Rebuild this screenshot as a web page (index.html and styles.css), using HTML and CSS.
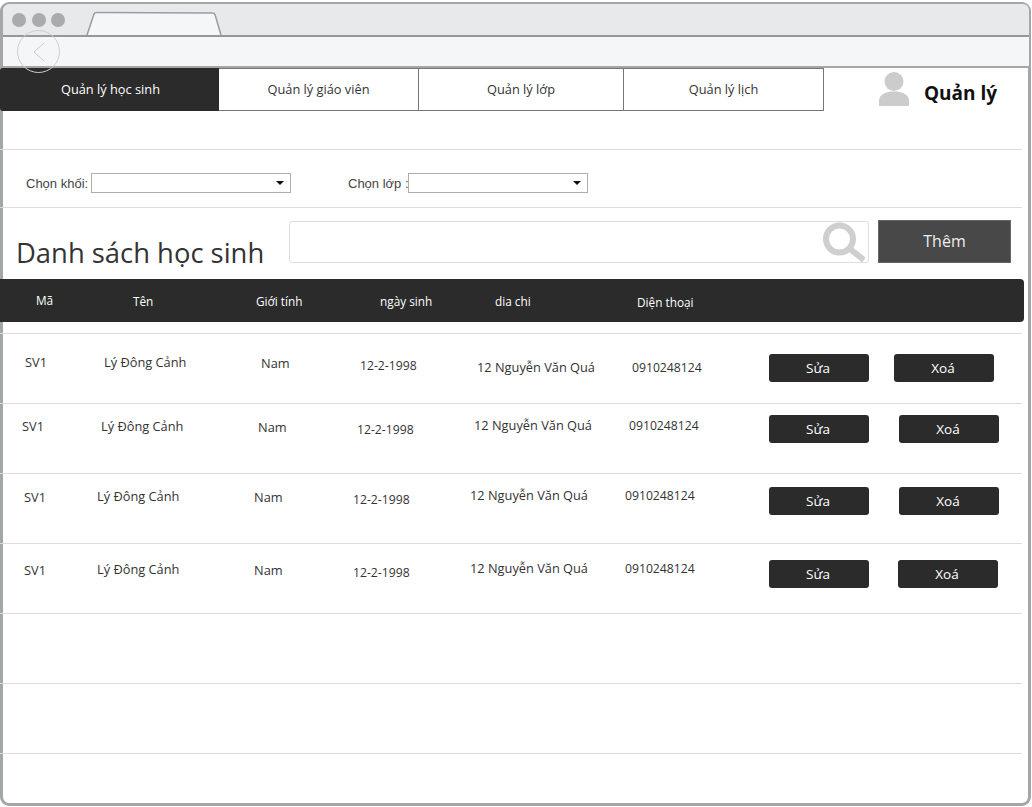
FILE: index.html
```html
<!DOCTYPE html>
<html lang="en">
<head>
  <meta charset="UTF-8">
  <title>Quản lý học sinh</title>
  <link rel="stylesheet" href="styles.css">
</head>
<body>
  <div class="window">
    <div class="chrome">
      <div class="tabstrip">
        <span class="dot"></span>
        <span class="dot"></span>
        <span class="dot"></span>
        <svg class="browser-tab" width="136" height="25" viewBox="0 0 136 25">
          <path d="M1 24 L8 3 Q8.5 1.5 11 1.5 L126 2 Q128.5 2 129 3.5 L135 24" fill="#f5f6f8" stroke="#9a9ea1" stroke-width="1.5"/>
        </svg>
      </div>
      <div class="addressbar"></div>
      <div class="back">
        <svg width="14" height="20" viewBox="0 0 14 20">
          <path d="M12 1 L2 10 L12 19" fill="none" stroke="#c9c9c9" stroke-width="1"/>
        </svg>
      </div>
    </div>

    <div class="topnav">
      <a class="nav-item nav-active">Quản lý học sinh</a>
      <a class="nav-item">Quản lý giáo viên</a>
      <a class="nav-item nav-w3">Quản lý lớp</a>
      <a class="nav-item">Quản lý lịch</a>
      <div class="user">
        <svg width="30" height="34" viewBox="0 0 30 34">
          <circle cx="15" cy="9.5" r="9.5" fill="#cccccc"/>
          <path d="M0 34 V29 C0 22 7 19.5 15 19.5 C23 19.5 30 22 30 29 V34 Z" fill="#cccccc"/>
        </svg>
        <span class="user-name">Quản lý</span>
      </div>
    </div>

    <div class="filters">
      <label class="filter-label label-khoi">Chọn khối:</label>
      <div class="select select-khoi"></div>
      <label class="filter-label label-lop">Chọn lớp :</label>
      <div class="select select-lop"></div>
    </div>

    <div class="title-row">
      <h1 class="page-title">Danh sách học sinh</h1>
      <div class="search">
        <svg width="44" height="40" viewBox="0 0 44 40">
          <circle cx="18.5" cy="17" r="13.5" fill="none" stroke="#cfcfcf" stroke-width="6"/>
          <path d="M29 27 L43 38" fill="none" stroke="#cfcfcf" stroke-width="6"/>
        </svg>
      </div>
      <button class="btn-add">Thêm</button>
    </div>

    <div class="table-head">
      <span class="th-ma">Mã</span>
      <span class="th-ten">Tên</span>
      <span class="th-gt">Giới tính</span>
      <span class="th-ns">ngày sinh</span>
      <span class="th-dc">dia chi</span>
      <span class="th-dt">Diện thoại</span>
    </div>

    <div class="rows">
      <div class="row row-1">
        <span>SV1</span><span>Lý Đông Cảnh</span><span>Nam</span><span class="date">12-2-1998</span><span>12 Nguyễn Văn Quá</span><span class="phone">0910248124</span>
        <button class="btn">Sửa</button><button class="btn">Xoá</button>
      </div>
      <div class="row row-2">
        <span>SV1</span><span>Lý Đông Cảnh</span><span>Nam</span><span class="date">12-2-1998</span><span>12 Nguyễn Văn Quá</span><span class="phone">0910248124</span>
        <button class="btn">Sửa</button><button class="btn">Xoá</button>
      </div>
      <div class="row row-3">
        <span>SV1</span><span>Lý Đông Cảnh</span><span>Nam</span><span class="date">12-2-1998</span><span>12 Nguyễn Văn Quá</span><span class="phone">0910248124</span>
        <button class="btn">Sửa</button><button class="btn">Xoá</button>
      </div>
      <div class="row row-4">
        <span>SV1</span><span>Lý Đông Cảnh</span><span>Nam</span><span class="date">12-2-1998</span><span>12 Nguyễn Văn Quá</span><span class="phone">0910248124</span>
        <button class="btn">Sửa</button><button class="btn">Xoá</button>
      </div>
      <div class="row"></div>
      <div class="row"></div>
    </div>
  </div>
</body>
</html>
```

FILE: styles.css
```css
*, *::before {
  box-sizing: border-box;
}
html, body {
  margin: 0;
  background: #fff;
}
body {
  font-family: "Open Sans", sans-serif;
  color: #333;
  overflow: hidden;
}
.window {
  position: relative;
  width: 1032px;
  height: 807px;
}
/* browser frame sits under the content, black bars run over it */
.window::before {
  content: "";
  position: absolute;
  left: 0;
  top: 2px;
  width: 1031px;
  height: 804px;
  border: 3px solid #a3a7aa;
  border-radius: 9px;
}

/* browser chrome */
.chrome {
  position: relative;
  height: 68px;
  padding: 4px 3px 0;
}
.tabstrip {
  display: flex;
  align-items: center;
  height: 33px;
  padding-left: 9px;
  gap: 5.5px;
  background: #e8e9eb;
  border-bottom: 2px solid #94989b;
  border-radius: 6px 6px 0 0;
}
.dot {
  width: 14px;
  height: 14px;
  margin-top: 1px;
  border-radius: 50%;
  background: #a9abad;
}
.browser-tab {
  margin: 4px 0 -4px 15.5px;
  display: block;
}
.addressbar {
  height: 31px;
  background: #f5f6f8;
  border-bottom: 2px solid #a3a7aa;
}
.back {
  position: absolute;
  left: 17px;
  top: 30px;
  width: 43px;
  height: 43px;
  border: 1px solid #cfcfcf;
  border-radius: 50%;
  display: flex;
  align-items: center;
  justify-content: center;
  z-index: 2;
}

/* top nav */
.topnav {
  position: relative;
  display: flex;
  height: 43px;
}
.nav-item {
  display: flex;
  align-items: center;
  justify-content: center;
  width: 200px;
  padding-bottom: 2px;
  background: #fff;
  border: 1px solid #777;
  border-left: 0;
  font-size: 12.8px;
  color: #333;
}
.nav-active {
  width: 219px;
  padding-left: 3px;
  background: #2b2b2b;
  border-color: #2b2b2b;
  color: #fff;
  border-radius: 3px 0 0 3px;
}
.nav-w3 {
  width: 205px;
}
.user {
  display: flex;
  align-items: flex-start;
  padding: 4px 0 0 55px;
}
.user-name {
  margin: 8px 0 0 15px;
  font-size: 19px;
  font-weight: 700;
  color: #111;
}

/* filters */
.filters {
  position: relative;
  display: flex;
  align-items: flex-start;
  height: 59px;
  margin-top: 38px;
  padding-top: 23px;
  border-top: 1px solid #dcdcdc;
  border-bottom: 1px solid #dcdcdc;
  width: 1022px;
}
.filter-label {
  font-family: "Liberation Sans", Arial, sans-serif;
  font-size: 13px;
  line-height: 22px;
  color: #444;
  white-space: nowrap;
}
.label-khoi {
  margin-left: 26px;
  width: 65px;
}
.label-lop {
  margin-left: 57px;
  width: 60px;
}
.select {
  position: relative;
  height: 20px;
  background: #fff;
  border: 1px solid #adadad;
}
.select::after {
  content: "";
  position: absolute;
  right: 6px;
  top: 7px;
  border-left: 4px solid transparent;
  border-right: 4px solid transparent;
  border-top: 4px solid #111;
}
.select-khoi {
  width: 200px;
}
.select-lop {
  width: 180px;
}

/* title + search */
.title-row {
  position: relative;
  display: flex;
  align-items: flex-start;
  height: 71px;
  padding: 12px 0 0 16px;
}
.page-title {
  width: 273px;
  margin: 14px 0 0;
  font-size: 27.4px;
  font-weight: 400;
  line-height: 37px;
  color: #333;
  white-space: nowrap;
}
.search {
  display: flex;
  justify-content: flex-end;
  align-items: center;
  width: 580px;
  height: 42px;
  margin-top: 1px;
  padding-right: 3px;
  border: 1px solid #dedede;
  border-radius: 3px;
  background: #fff;
}
.btn-add {
  width: 133px;
  height: 43px;
  margin-left: 9px;
  padding: 0 0 2px;
  background: #484848;
  border: 1px solid #666;
  color: #eee;
  font: 16px "Open Sans", sans-serif;
}

/* table */
.table-head {
  position: relative;
  display: grid;
  grid-template-columns: 97px 123px 124px 115px 142px 1fr;
  height: 43px;
  width: 1024px;
  padding-left: 36px;
  background: #2b2b2b;
  border-radius: 0 4px 4px 0;
  color: #fff;
  font-size: 11.8px;
}
.table-head span {
  line-height: 16px;
}
.th-ma { margin-top: 13px; }
.th-ten { margin-top: 14px; }
.th-gt { margin-top: 14px; }
.th-ns { margin-top: 14px; }
.th-dc { margin-top: 14px; }
.th-dt { margin-top: 15px; }

.rows {
  position: relative;
  margin-top: 11px;
  width: 1022px;
  border-top: 1px solid #dcdcdc;
}
.row {
  display: grid;
  align-items: start;
  height: 70px;
  border-bottom: 1px solid #dcdcdc;
  font-size: 12.8px;
  line-height: 18px;
}
.phone, .date {
  font-size: 12.2px;
  line-height: 20px;
}
.btn {
  width: 100px;
  height: 28px;
  padding: 0 2px 0 0;
  background: #2b2b2b;
  border: 0;
  border-radius: 3px;
  color: #fff;
  font: 13.5px "Open Sans", sans-serif;
}

/* rows are not lined up in the mockup, each one has its own offsets */
.row-1 {
  grid-template-columns: 79px 157px 99px 117px 155px 137px 125px 100px;
  padding-left: 25px;
}
.row-1 > :nth-child(1), .row-1 > :nth-child(2) { margin-top: 19px; }
.row-1 > :nth-child(3) { margin-top: 20px; }
.row-1 > :nth-child(4) { margin-top: 22px; }
.row-1 > :nth-child(5), .row-1 > :nth-child(6) { margin-top: 24px; }
.row-1 > .btn { margin-top: 20px; }

.row-2 {
  grid-template-columns: 79px 157px 99px 117px 155px 140px 130px 100px;
  padding-left: 22px;
}
.row-2 > :nth-child(1), .row-2 > :nth-child(2) { margin-top: 13px; }
.row-2 > :nth-child(3) { margin-top: 14px; }
.row-2 > :nth-child(4) { margin-top: 16px; }
.row-2 > :nth-child(5), .row-2 > :nth-child(6) { margin-top: 12px; }
.row-2 > .btn { margin-top: 11px; }

.row-3 {
  grid-template-columns: 73px 157px 99px 117px 155px 144px 130px 100px;
  padding-left: 24px;
}
.row-3 > :nth-child(1) { margin-top: 14px; }
.row-3 > :nth-child(2) { margin-top: 13px; }
.row-3 > :nth-child(3) { margin-top: 14px; }
.row-3 > :nth-child(4) { margin-top: 16px; }
.row-3 > :nth-child(5), .row-3 > :nth-child(6) { margin-top: 12px; }
.row-3 > .btn { margin-top: 13px; }

.row-4 {
  grid-template-columns: 73px 157px 99px 117px 155px 144px 129px 100px;
  padding-left: 24px;
}
.row-4 > :nth-child(1) { margin-top: 17px; }
.row-4 > :nth-child(2) { margin-top: 16px; }
.row-4 > :nth-child(3) { margin-top: 17px; }
.row-4 > :nth-child(4) { margin-top: 19px; }
.row-4 > :nth-child(5), .row-4 > :nth-child(6) { margin-top: 15px; }
.row-4 > .btn { margin-top: 16px; }
```
